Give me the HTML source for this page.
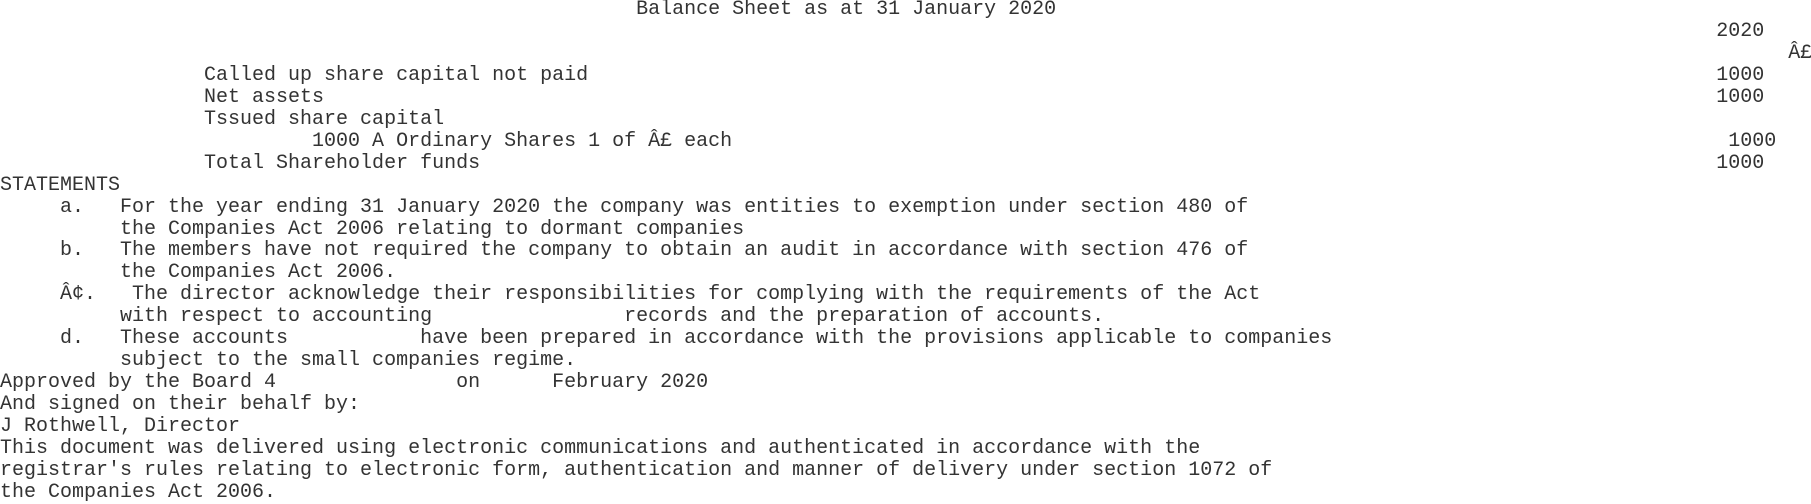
<!DOCTYPE html>
<html><head><meta charset="utf-8"><style>
html,body{margin:0;padding:0;background:#fff;width:1811px;height:501px;overflow:hidden}
pre{margin:0;position:absolute;left:0;top:-1px;font-family:"Liberation Mono",monospace;font-size:20px;line-height:21.95px;color:#333;white-space:pre}
</style></head><body><pre>                                                     Balance Sheet as at 31 January 2020
                                                                                                                                               2020
                                                                                                                                                     Â£
                 Called up share capital not paid                                                                                              1000
                 Net assets                                                                                                                    1000
                 Tssued share capital
                          1000 A Ordinary Shares 1 of Â£ each                                                                                   1000
                 Total Shareholder funds                                                                                                       1000
STATEMENTS
     a.   For the year ending 31 January 2020 the company was entities to exemption under section 480 of
          the Companies Act 2006 relating to dormant companies
     b.   The members have not required the company to obtain an audit in accordance with section 476 of
          the Companies Act 2006.
     Â¢.   The director acknowledge their responsibilities for complying with the requirements of the Act
          with respect to accounting                records and the preparation of accounts.
     d.   These accounts           have been prepared in accordance with the provisions applicable to companies
          subject to the small companies regime.
Approved by the Board 4               on      February 2020
And signed on their behalf by:
J Rothwell, Director
This document was delivered using electronic communications and authenticated in accordance with the
registrar's rules relating to electronic form, authentication and manner of delivery under section 1072 of
the Companies Act 2006.</pre></body></html>
